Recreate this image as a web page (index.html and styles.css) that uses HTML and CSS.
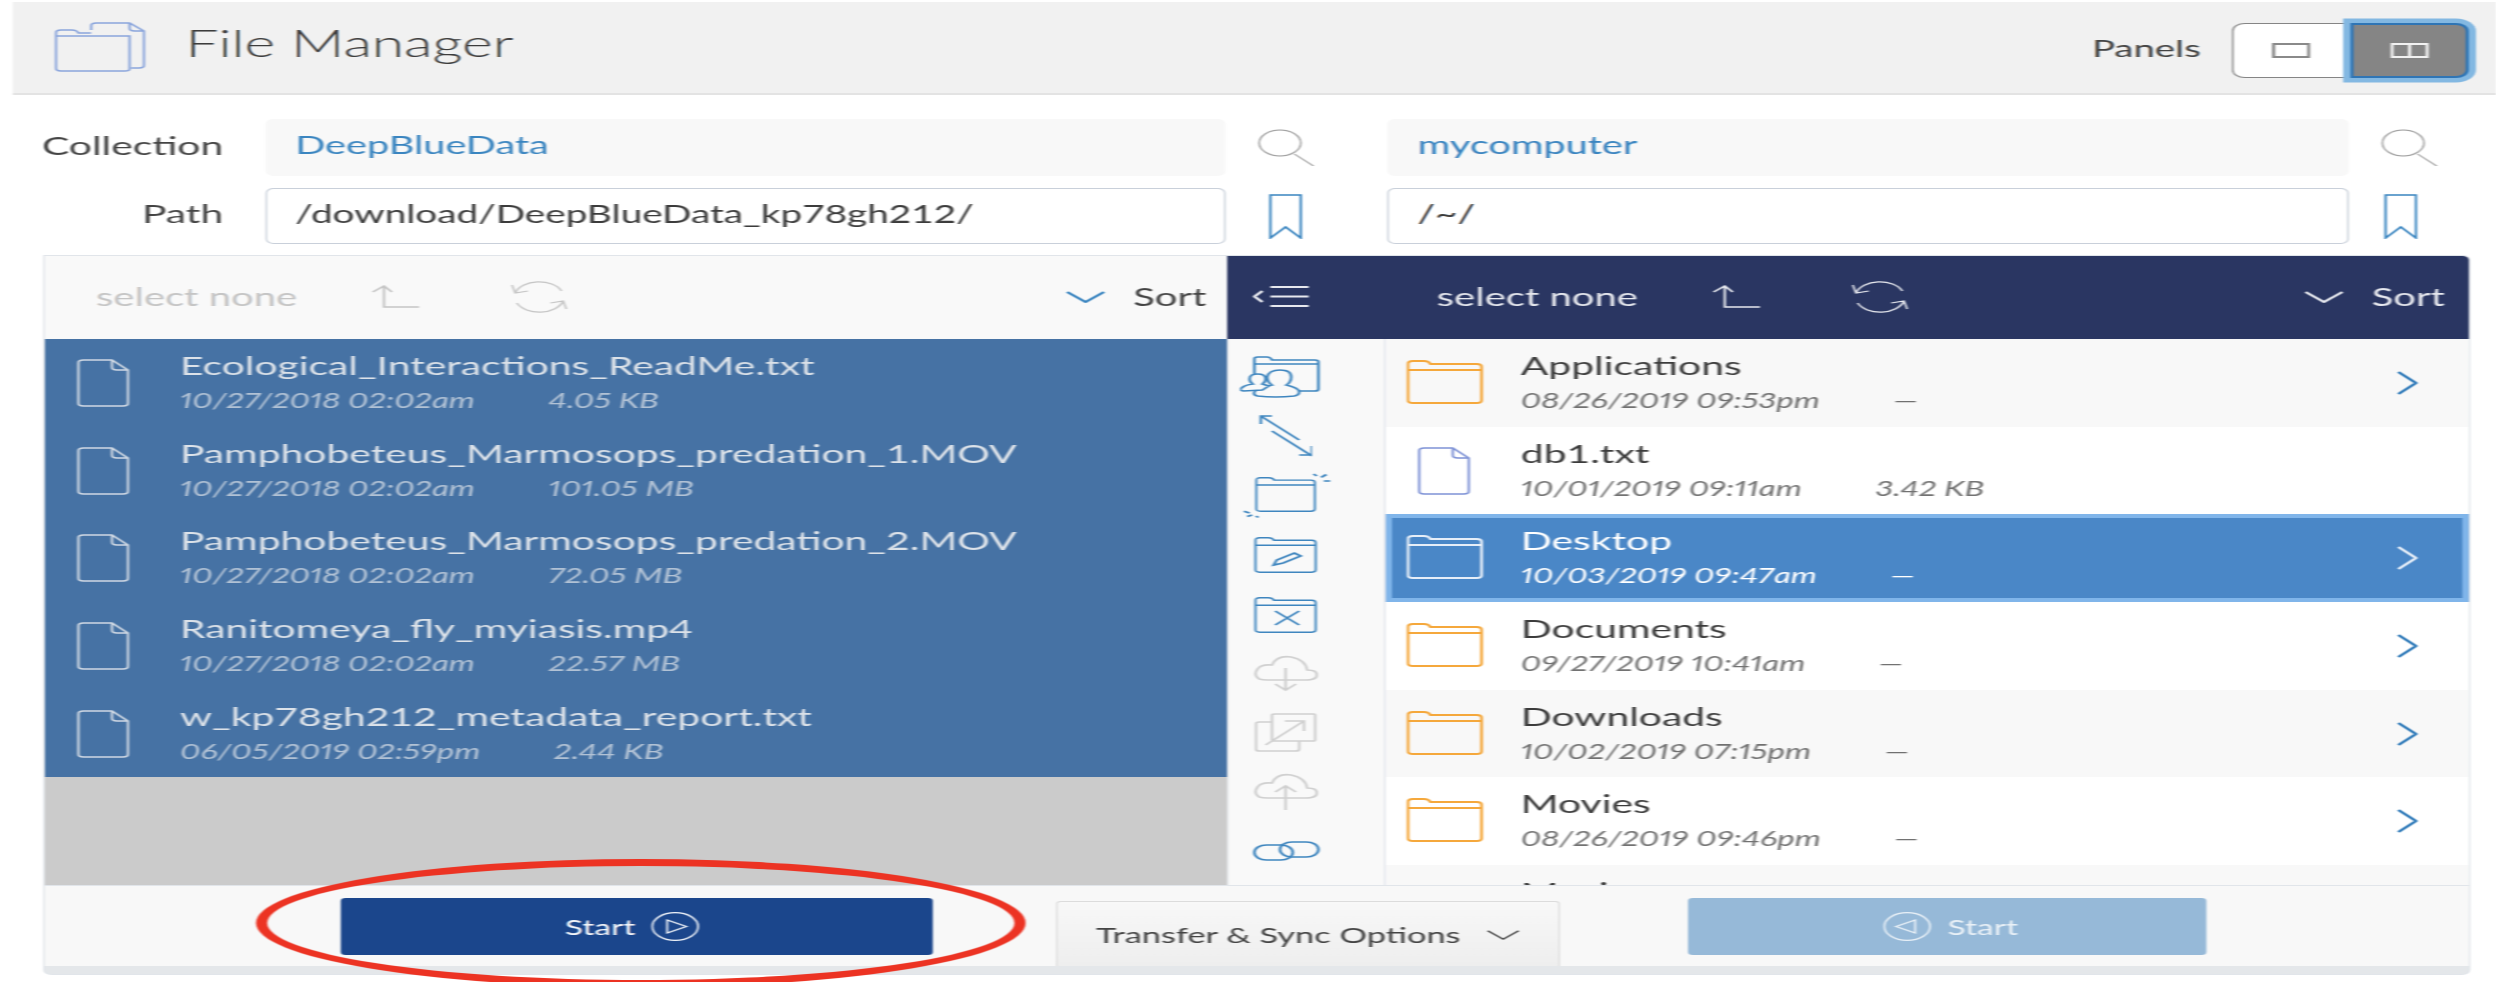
FILE: index.html
```html
<!DOCTYPE html>
<html lang="en">
  <head>
    <meta charset="UTF-8">
    <title>File Manager</title>
    <link rel="stylesheet" href="styles.css">
  </head>
  <body>
    <svg class="defs" aria-hidden="true">
      <symbol id="i-folder" viewBox="0 0 48 44"><path d="M1 40V4q0-3 3-3h7q3 0 4 3h29q3 0 3 3v33q0 3-3 3H4q-3 0-3-3zM1 10h46"/></symbol>
      <symbol id="i-file" viewBox="0 0 33 48"><path d="M4 1h18l10 10v33q0 3-3 3H4q-3 0-3-3V4q0-3 3-3zM22 1v7q0 3 3 3h7"/></symbol>
      <symbol id="i-search" viewBox="0 0 36 37"><ellipse cx="14" cy="14" rx="13" ry="13"/><path d="M23 25l12 12"/></symbol>
      <symbol id="i-mark" viewBox="0 0 21 45"><path d="M1 1h19v43l-9.500-11L1 44z"/></symbol>
      <symbol id="i-up" viewBox="0 0 31 23"><path d="M8 1v21h22M1 7l7-6 5 6"/></symbol>
      <symbol id="i-sync" viewBox="0 0 36 34"><path d="M3 13A15.500 15.500 0 0 1 32 11M33 21A15.500 15.500 0 0 1 4 23M1 5l2 8 8-2M35 29l-2-8-8 2"/></symbol>
      <symbol id="i-down" viewBox="0 0 25 12"><path d="M1 1l11.500 10L24 1"/></symbol>
      <symbol id="i-right" viewBox="0 0 13 24"><path d="M1 1l11 11L1 23"/></symbol>
      <symbol id="i-cloud" viewBox="0 0 41 26"><path d="M9 25h24q7 0 7-5t-6-5q-1-10-10-13-9-2-12 8-7-1-9 4-3 6 1 10 2 1 5 1z"/></symbol>
    </svg>

    <div class="stage">
      <header class="topbar">
        <svg class="app-icon" viewBox="0 0 57 50"><path d="M23 8V4q0-3 3-3h21l9 8v34q0 3-3 3h-5M47 1v5q0 3 3 3h6M1 46V11q0-3 3-3h7q3 0 4 3h8M1 14h46v33q0 2-3 2H4q-3 0-3-3z"/></svg>
        <h1 class="title">File Manager</h1>
        <span class="panels-label">Panels</span>
        <div class="seg">
          <button type="button" class="seg-btn">
            <svg class="seg-icon" viewBox="0 0 24 15"><rect x="1" y="1" width="22" height="13"/></svg>
          </button>
          <button type="button" class="seg-btn seg-on">
            <svg class="seg-icon" viewBox="0 0 24 15"><rect x="1" y="1" width="22" height="13"/><path d="M12 1v13"/></svg>
          </button>
        </div>
      </header>

      <form class="locations">
        <label class="loc-label">Collection</label>
        <div class="field field-ro">DeepBlueData</div>
        <svg class="loc-icon search"><use href="#i-search"/></svg>
        <div class="field field-ro">mycomputer</div>
        <svg class="loc-icon search"><use href="#i-search"/></svg>

        <label class="loc-label">Path</label>
        <div class="field">/download/DeepBlueData_kp78gh212/</div>
        <svg class="loc-icon mark mark-l"><use href="#i-mark"/></svg>
        <div class="field">/~/</div>
        <svg class="loc-icon mark"><use href="#i-mark"/></svg>
      </form>

      <section class="manager">
        <div class="toolbar toolbar-left">
          <span class="tool-select">select none</span>
          <svg class="tool-up"><use href="#i-up"/></svg>
          <svg class="tool-sync"><use href="#i-sync"/></svg>
          <svg class="tool-chevron"><use href="#i-down"/></svg>
          <span class="tool-sort">Sort</span>
        </div>
        <div class="toolbar toolbar-right">
          <svg class="tool-menu" viewBox="0 0 35 21"><path d="M6 5l-5 5.500L6 16M11 1h24M11 10.500h24M11 20h24"/></svg>
          <span class="tool-select">select none</span>
          <svg class="tool-up"><use href="#i-up"/></svg>
          <svg class="tool-sync"><use href="#i-sync"/></svg>
          <svg class="tool-chevron"><use href="#i-down"/></svg>
          <span class="tool-sort">Sort</span>
        </div>

        <ul class="list list-left">
          <li class="row">
            <svg class="row-file"><use href="#i-file"/></svg>
            <div><div class="name">Ecological_Interactions_ReadMe.txt</div><div class="meta"><span>10/27/2018 02:02am</span><span>4.05 KB</span></div></div>
          </li>
          <li class="row">
            <svg class="row-file"><use href="#i-file"/></svg>
            <div><div class="name">Pamphobeteus_Marmosops_predation_1.MOV</div><div class="meta"><span>10/27/2018 02:02am</span><span>101.05 MB</span></div></div>
          </li>
          <li class="row">
            <svg class="row-file"><use href="#i-file"/></svg>
            <div><div class="name">Pamphobeteus_Marmosops_predation_2.MOV</div><div class="meta"><span>10/27/2018 02:02am</span><span>72.05 MB</span></div></div>
          </li>
          <li class="row">
            <svg class="row-file"><use href="#i-file"/></svg>
            <div><div class="name">Ranitomeya_fly_myiasis.mp4</div><div class="meta"><span>10/27/2018 02:02am</span><span>22.57 MB</span></div></div>
          </li>
          <li class="row">
            <svg class="row-file"><use href="#i-file"/></svg>
            <div><div class="name">w_kp78gh212_metadata_report.txt</div><div class="meta"><span>06/05/2019 02:59pm</span><span>2.44 KB</span></div></div>
          </li>
        </ul>

        <nav class="actions">
          <svg class="act-share" viewBox="0 0 50 42">
            <path d="M9 22V3q0-2 2-2h6q2 0 3 3h27q2 0 2 2v27q0 2-2 2H37M9 8h40"/>
            <path class="act-bg" d="M19 40q-3-1-2-4 1-4 11-7-3-3-3-8 1-7 8-7t7 7q0 5-3 8 8 3 8 7 0 3-3 4-12 2-23 0z" transform="translate(-8 0)"/>
            <path class="act-bg" d="M2 35q-3-1-1-3 2-3 7-4-2-2-2-5 0-5 5-5t5 5q0 3-2 5l4 2-4 4z"/>
          </svg>
          <svg class="act-swap" viewBox="0 0 33 43"><path d="M25 26L1 2M8 17l25 25M8 2H1v8M25 41h8v-9"/></svg>
          <svg class="act-new" viewBox="0 0 55 48">
            <use href="#i-folder" x="6" y="5" width="41" height="35"/>
            <path d="M44 2l2 2M48.700 5.400L52 2.500M50.400 9h4M.4 39.300L4 41M2.500 44.600L5.600 43M8 44l1.500 1.500"/>
          </svg>
          <svg class="act-folder" viewBox="0 0 41 36">
            <use href="#i-folder" width="41" height="36"/>
            <path d="M13 28l2-5 11-7 4 3-11 7zM13 28l3-1"/>
          </svg>
          <svg class="act-folder" viewBox="0 0 41 36">
            <use href="#i-folder" width="41" height="36"/>
            <path d="M14 14l15 14M29 14L14 28"/>
          </svg>
          <svg class="act-cloud off" viewBox="0 0 41 37">
            <use href="#i-cloud" width="41" height="26"/>
            <path d="M20.500 13v22M14 29l6.500 6 6.500-6"/>
          </svg>
          <svg class="act-ext off" viewBox="0 0 39 39">
            <path d="M11 9H3q-2 0-2 2v25q0 2 2 2h23q2 0 2-2v-8M13 1h24q1 0 1 1v25q0 1-1 1H13q-2 0-2-1V2q0-1 2-1zM7 32L31 8M19 8h12v10"/>
          </svg>
          <svg class="act-cloud off" viewBox="0 0 41 37">
            <use href="#i-cloud" width="41" height="26"/>
            <path d="M20.500 37V13M14 19l6.500-6 6.500 6"/>
          </svg>
          <svg class="act-link" viewBox="0 0 42 20">
            <rect x="1" y="4" width="24" height="15" rx="7.500"/>
            <rect x="17" y="1" width="24" height="15" rx="7.500"/>
          </svg>
        </nav>

        <ul class="list list-right">
          <li class="row">
            <svg class="row-folder"><use href="#i-folder"/></svg>
            <div><div class="name">Applications</div><div class="meta"><span>08/26/2019 09:53pm</span><span>—</span></div></div>
            <svg class="row-go"><use href="#i-right"/></svg>
          </li>
          <li class="row">
            <svg class="row-file"><use href="#i-file"/></svg>
            <div><div class="name">db1.txt</div><div class="meta"><span>10/01/2019 09:11am</span><span>3.42 KB</span></div></div>
          </li>
          <li class="row row-selected">
            <svg class="row-folder"><use href="#i-folder"/></svg>
            <div><div class="name">Desktop</div><div class="meta"><span>10/03/2019 09:47am</span><span>—</span></div></div>
            <svg class="row-go"><use href="#i-right"/></svg>
          </li>
          <li class="row">
            <svg class="row-folder"><use href="#i-folder"/></svg>
            <div><div class="name">Documents</div><div class="meta"><span>09/27/2019 10:41am</span><span>—</span></div></div>
            <svg class="row-go"><use href="#i-right"/></svg>
          </li>
          <li class="row">
            <svg class="row-folder"><use href="#i-folder"/></svg>
            <div><div class="name">Downloads</div><div class="meta"><span>10/02/2019 07:15pm</span><span>—</span></div></div>
            <svg class="row-go"><use href="#i-right"/></svg>
          </li>
          <li class="row">
            <svg class="row-folder"><use href="#i-folder"/></svg>
            <div><div class="name">Movies</div><div class="meta"><span>08/26/2019 09:46pm</span><span>—</span></div></div>
            <svg class="row-go"><use href="#i-right"/></svg>
          </li>
          <li class="row">
            <svg class="row-folder"><use href="#i-folder"/></svg>
            <div><div class="name">Music</div></div>
          </li>
        </ul>

        <footer class="footer">
          <button type="button" class="start start-left">
            Start
            <svg class="start-icon" viewBox="0 0 30 29"><ellipse cx="15" cy="14.500" rx="14.300" ry="13.800"/><path d="M10 8l12 6.500L10 21z"/></svg>
          </button>
          <button type="button" class="options">
            Transfer &amp; Sync Options
            <svg class="options-chevron"><use href="#i-down"/></svg>
          </button>
          <button type="button" class="start start-right">
            <svg class="start-icon" viewBox="0 0 30 29"><ellipse cx="15" cy="14.500" rx="14.300" ry="13.800"/><path d="M20 8L8 14.500 20 21z"/></svg>
            Start
          </button>
        </footer>
      </section>

      <div class="annotation"></div>
    </div>
  </body>
</html>
```

FILE: styles.css
```css
/* The capture is stretched sideways, so the page is laid out at 1560 wide and scaled up */
html, body {
  margin: 0;
  background: #fff;
  overflow: hidden;
}
body {
  font-family: Lato, "Open Sans", sans-serif;
  color: #3c3c3c;
}
ul {
  list-style: none;
  margin: 0;
  padding: 0;
}
button {
  font: inherit;
  cursor: pointer;
}
svg {
  display: block;
  flex: none;
  fill: none;
  stroke: currentColor;
  stroke-width: 1.5;
}
.defs {
  width: 0;
  height: 0;
  position: absolute;
}
.stage {
  position: relative;
  box-sizing: border-box;
  width: 1560px;
  height: 982px;
  padding: 2px 0 0 7.5px;
  overflow: hidden;
  transform: scaleX(1.6);
  transform-origin: 0 0;
  filter: blur(.6px);
}

/* Top bar */
.topbar {
  display: flex;
  align-items: center;
  box-sizing: border-box;
  height: 93px;
  padding: 0 17.5px 0 26.5px;
  background: #f1f1f1;
  border-bottom: 2px solid #e3e3e3;
}
.app-icon {
  width: 57px;
  height: 50px;
  color: #8aa5dc;
  margin-top: -2px;
}
.title {
  margin: -10px 0 0 25px;
  font-size: 36.7px;
  font-weight: 300;
  color: #3c3c3c;
}
.panels-label {
  margin-left: auto;
  font-size: 24px;
  color: #444;
}
.seg {
  display: flex;
  margin-left: 19px;
  margin-top: 5px;
}
.seg-btn {
  width: 74px;
  height: 55px;
  padding: 0;
  display: flex;
  align-items: center;
  justify-content: center;
  background: #fff;
  color: #8a8a8a;
  border: 1.5px solid #858585;
  border-right: 0;
  border-radius: 8px 0 0 8px;
}
.seg-on {
  position: relative;
  background: #858585;
  color: #f2f2f2;
  border: 2px solid #2f75b5;
  border-radius: 0 8px 8px 0;
  box-shadow: 0 0 0 4.5px #83b8e2;
}
.seg-icon {
  width: 24px;
  height: 15px;
  stroke-width: 2;
}

/* Collection and path */
.locations {
  display: grid;
  grid-template-columns: 158px 600.5px 101px 600.5px 1fr;
  grid-template-rows: 57px 56px;
  row-gap: 12px;
  align-items: center;
  padding-top: 24px;
}
.loc-label {
  text-align: right;
  padding-right: 26px;
  padding-bottom: 6px;
  font-size: 25.5px;
  color: #444;
}
.field {
  box-sizing: border-box;
  height: 100%;
  display: flex;
  align-items: center;
  padding: 0 0 6px 18px;
  font-size: 24.2px;
  background: #fff;
  border: 1px solid #c9d0da;
  border-radius: 5px;
}
.field-ro {
  font-size: 24.8px;
  background: #f8f8f8;
  border-color: #f8f8f8;
  color: #3a85c0;
}
.loc-icon {
  margin-left: 20px;
}
.search {
  width: 36px;
  height: 37px;
  color: #979797;
  stroke-width: 1;
}
.mark {
  width: 21px;
  height: 45px;
  margin-left: 22px;
  color: #3a85c0;
}
.mark-l {
  margin-left: 27px;
}

/* Panels */
.manager {
  display: grid;
  grid-template-columns: 739.5px 99px 1fr;
  grid-template-rows: 83px 546px 81px;
  width: 1515.5px;
  height: 718px;
  margin: 12px 0 0 20px;
  background: #e4e7ea;
  border-radius: 0 4px 4px 4px;
  box-shadow: 0 0 0 1px #e1e5ea;
}
.toolbar {
  display: flex;
  align-items: center;
  font-size: 25px;
  padding-bottom: 4px;
  box-sizing: border-box;
}
.toolbar svg {
  margin-top: 2px;
}
.toolbar-left {
  padding-left: 32.5px;
  padding-right: 13px;
  background: #f9f9f9;
  color: #c5c5c5;
}
.toolbar-right {
  grid-column: 2 / 4;
  padding-left: 15.5px;
  padding-right: 15px;
  background: #2a3662;
  color: #e6e8ee;
  border-radius: 0 4px 0 0;
}
.tool-select {
  width: 127px;
  white-space: nowrap;
}
.tool-menu {
  width: 35px;
  height: 21px;
  margin-right: 80.5px;
  stroke-width: 2;
}
.tool-up {
  width: 31px;
  height: 23px;
  margin-left: 45px;
}
.tool-sync {
  width: 36px;
  height: 34px;
  margin-left: 56px;
  stroke-width: 1.2;
}
.tool-chevron {
  width: 25px;
  height: 12px;
  margin-left: auto;
  stroke-width: 2;
}
.toolbar-left .tool-chevron {
  color: #3a85c0;
}
.tool-sort {
  margin-left: 17px;
  color: #444;
}
.toolbar-right .tool-sort {
  color: #e6e8ee;
}
.list {
  overflow: hidden;
}
.list-left {
  background: #cbcbcb;
}
.list-left .row {
  padding-left: 20.5px;
  background: #4672a4;
  color: #dce2e9;
}
.list-left .row-file {
  margin-right: 31.5px;
  color: #cfd8e3;
}
.row {
  display: flex;
  align-items: center;
  box-sizing: border-box;
  height: 87.7px;
}
.row > div {
  align-self: flex-start;
  padding-top: 9px;
}
.name {
  font-size: 25.5px;
  line-height: 35px;
  white-space: nowrap;
}
.meta {
  display: flex;
  font-size: 20.7px;
  font-variant-numeric: proportional-nums;
  line-height: 34px;
  font-style: italic;
  opacity: .72;
  white-space: nowrap;
}
.meta span + span {
  margin-left: 46px;
}
.row-file {
  width: 33px;
  height: 48px;
}
.list-right {
  background: #fff;
}
.list-right .row {
  padding-left: 13px;
  padding-right: 32.5px;
}
.list-right .row:nth-child(odd) {
  background: #f8f8f8;
}
.list-right .row-file {
  margin: 0 31.5px 0 7px;
  color: #7f93d6;
}
.row-folder {
  width: 48px;
  height: 44px;
  margin-right: 23.5px;
  color: #f5a83c;
  margin-bottom: 2px;
  stroke-width: 1.8;
}
.row-go {
  width: 13px;
  height: 24px;
  margin-left: auto;
  color: #2f7ab9;
  stroke-width: 2;
}
.list-right .row.row-selected {
  background: #4a87c7;
  box-shadow: inset 0 0 0 4px #80b5ea;
  color: #fff;
}
.row-selected .row-folder,
.row-selected .row-go {
  color: #e6eef8;
}
.row-selected .meta {
  opacity: 1;
}

/* Action column */
.actions {
  display: flex;
  flex-direction: column;
  box-sizing: border-box;
  padding-top: 8px;
  background: #f9f9f9;
  border-left: 1px solid #e6e9ed;
  border-right: 1px solid #dfe3ea;
  color: #3f86bf;
}
.actions svg {
  stroke-width: 1.7;
}
.act-share {
  width: 50px;
  height: 42px;
  margin: 9px 0 9px 7px;
}
.act-bg {
  fill: #f9f9f9;
}
.act-swap {
  width: 33px;
  height: 43px;
  margin: 7px 0 9px 19px;
}
.act-new {
  width: 55px;
  height: 48px;
  margin: 6px 0 5px 9px;
}
.act-folder {
  width: 41px;
  height: 36px;
  margin: 12px 0 11.5px 15px;
}
.act-cloud {
  width: 41px;
  height: 37px;
  margin: 11px 0 11px 15px;
}
.act-ext {
  width: 39px;
  height: 39px;
  margin: 10px 0 10px 15.5px;
}
.off {
  color: #d0d0d0;
}
.act-link {
  width: 42px;
  height: 20px;
  margin: 20px 0 20px 15px;
}

/* Footer */
.footer {
  grid-column: 1 / 4;
  display: flex;
  align-items: flex-start;
  padding: 12px 0 0 185px;
  background: #f8f8f8;
  border-top: 1px solid #e1e5ea;
  box-sizing: border-box;
}
.start {
  display: flex;
  align-items: center;
  justify-content: center;
  gap: 10px;
  height: 57px;
  padding: 0;
  font-size: 21px;
  border: 0;
  border-radius: 3px;
}
.start-left {
  width: 370px;
  padding-right: 5px;
  background: #1b468c;
  color: #f2f5fa;
}
.start-right {
  width: 324.5px;
  padding-left: 5px;
  margin-left: 80px;
  background: #96b9d8;
  color: #eaf1f7;
}
.start-icon {
  width: 30px;
  height: 29px;
  stroke-width: 1.2;
}
.options {
  display: flex;
  align-items: center;
  gap: 16px;
  box-sizing: border-box;
  width: 314.5px;
  height: 65px;
  margin: 3px 0 0 77.5px;
  padding: 1px 0 0 24px;
  font-size: 21.5px;
  color: #444;
  background: linear-gradient(#f8f8f8, #eee);
  border: 1px solid #dcdcdc;
  border-bottom: 0;
  border-radius: 3px 3px 0 0;
}
.options-chevron {
  width: 21px;
  height: 12px;
}

/* Red ring drawn over the screenshot */
.annotation {
  position: absolute;
  left: 159.5px;
  top: 859px;
  box-sizing: border-box;
  width: 481px;
  height: 128px;
  border: 7px solid #ec3323;
  border-radius: 50%;
}
```
